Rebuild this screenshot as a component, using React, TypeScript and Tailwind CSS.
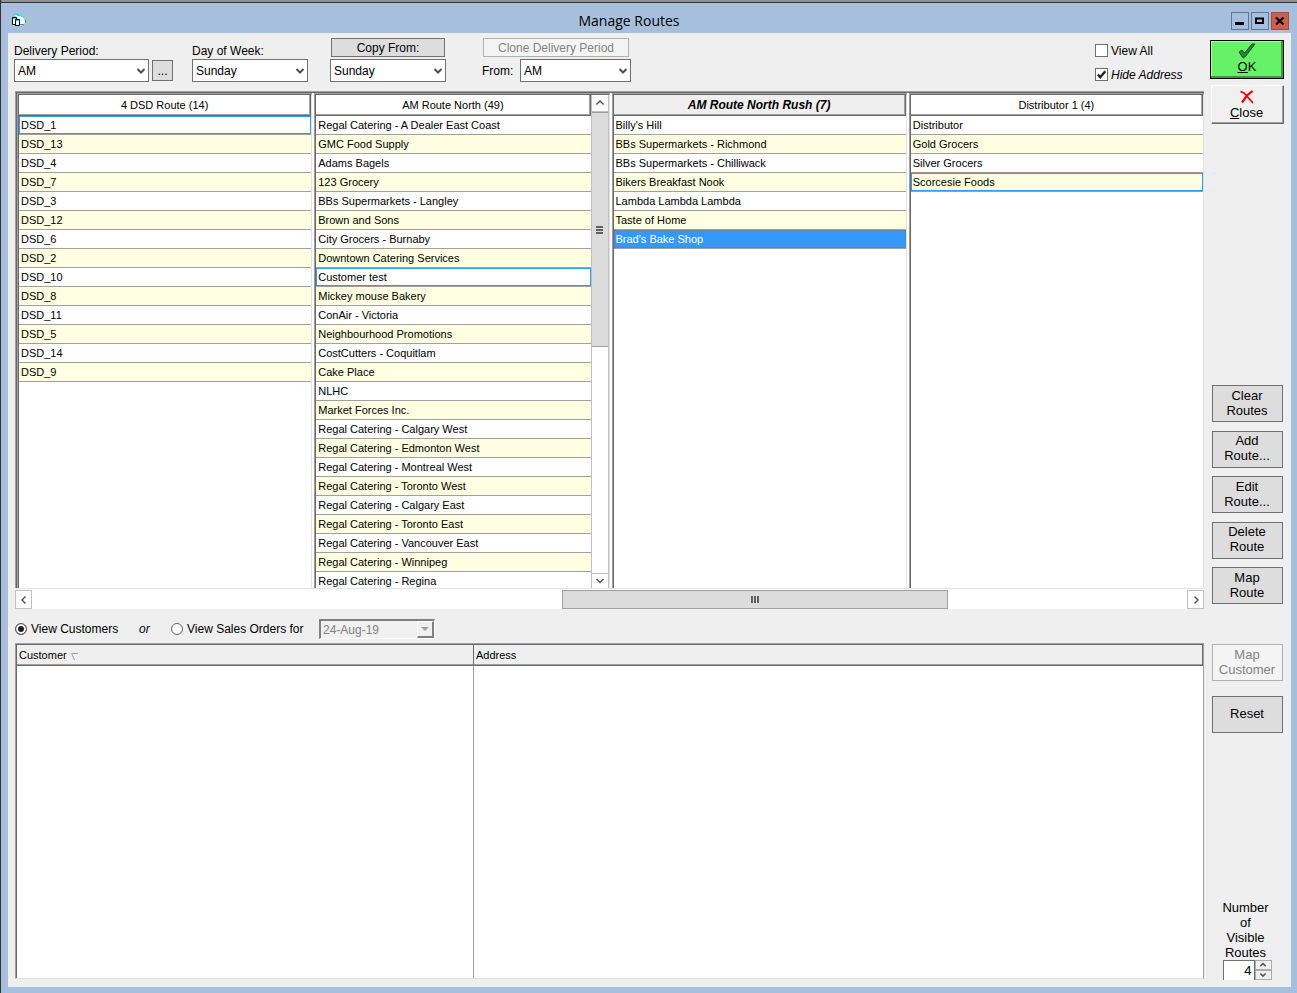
import { useState, type ReactNode } from "react";
import clsx from "clsx";

type Route = {
  title: string;
  stops: string[];
  focused?: number;
  selected?: number;
  active?: boolean;
  scroll?: boolean;
};

const routes: Route[] = [
  {
    title: "4 DSD Route (14)",
    focused: 0,
    stops: ["DSD_1", "DSD_13", "DSD_4", "DSD_7", "DSD_3", "DSD_12", "DSD_6", "DSD_2", "DSD_10", "DSD_8", "DSD_11", "DSD_5", "DSD_14", "DSD_9"],
  },
  {
    title: "AM Route North (49)",
    focused: 8,
    scroll: true,
    stops: [
      "Regal Catering - A Dealer East Coast",
      "GMC Food Supply",
      "Adams Bagels",
      "123 Grocery",
      "BBs Supermarkets - Langley",
      "Brown and Sons",
      "City Grocers - Burnaby",
      "Downtown Catering Services",
      "Customer test",
      "Mickey mouse Bakery",
      "ConAir - Victoria",
      "Neighbourhood Promotions",
      "CostCutters - Coquitlam",
      "Cake Place",
      "NLHC",
      "Market Forces Inc.",
      "Regal Catering - Calgary West",
      "Regal Catering - Edmonton West",
      "Regal Catering - Montreal West",
      "Regal Catering - Toronto West",
      "Regal Catering - Calgary East",
      "Regal Catering - Toronto East",
      "Regal Catering - Vancouver East",
      "Regal Catering - Winnipeg",
      "Regal Catering - Regina",
    ],
  },
  {
    title: "AM Route North Rush (7)",
    active: true,
    selected: 6,
    stops: [
      "Billy's Hill",
      "BBs Supermarkets - Richmond",
      "BBs Supermarkets - Chilliwack",
      "Bikers Breakfast Nook",
      "Lambda Lambda Lambda",
      "Taste of Home",
      "Brad's Bake Shop",
    ],
  },
  {
    title: "Distributor 1 (4)",
    focused: 3,
    stops: ["Distributor", "Gold Grocers", "Silver Grocers", "Scorcesie Foods"],
  },
];

function Chevron({ dir, className }: { dir: "up" | "down" | "left" | "right"; className?: string }) {
  const d = {
    up: "M1.5 6.5 L5 3 L8.5 6.5",
    down: "M1.5 3 L5 6.5 L8.5 3",
    left: "M6.5 1.5 L3 5 L6.5 8.5",
    right: "M3.5 1.5 L7 5 L3.5 8.5",
  }[dir];
  return (
    <svg viewBox="0 0 10 10" className={clsx("h-[10px] w-[10px] shrink-0", className)} fill="none" stroke="#505050" strokeWidth="1.4">
      <path d={d} />
    </svg>
  );
}

function Combo({ id, label, options, className }: { id: string; label?: string; options: string[]; className: string }) {
  return (
    <div className={clsx("relative", className)}>
      <select id={id} aria-label={label} className="block h-[23px] w-full appearance-none border border-[#707070] bg-white pl-[3px] pr-4 text-xs text-black outline-none">
        {options.map((o) => <option key={o}>{o}</option>)}
      </select>
      <Chevron dir="down" className="pointer-events-none absolute right-[3px] top-[7px] stroke-[2]" />
    </div>
  );
}

function Check({ label, italic, defaultChecked }: { label: string; italic?: boolean; defaultChecked?: boolean }) {
  return (
    <label className={clsx("flex h-[15px] items-center gap-[3px]", italic && "italic")}>
      <span className="relative h-[13px] w-[13px]">
        <input type="checkbox" defaultChecked={defaultChecked} className="peer block h-[13px] w-[13px] appearance-none border border-[#707070] bg-white" />
        <svg viewBox="0 0 13 13" className="pointer-events-none absolute inset-0 hidden peer-checked:block" fill="none" stroke="#1f1f1f" strokeWidth="2.2">
          <path d="M2.8 6.5 L5.2 9.3 L10.3 3.2" />
        </svg>
      </span>
      {label}
    </label>
  );
}

function SideButton({ children, disabled }: { children: ReactNode; disabled?: boolean }) {
  return (
    <button
      disabled={disabled}
      className="ml-[2px] mr-px h-[37px] border border-[#707070] bg-[#dddddd] pb-[2px] pr-px text-[13px] leading-[15px] disabled:border-[#adb2b5] disabled:bg-[#f4f4f4] disabled:text-[#838383]"
    >
      {children}
    </button>
  );
}

function VerticalScroll() {
  return (
    <div className="flex w-[18px] shrink-0 flex-col border-x border-[#c0c0c0] bg-white">
      <button aria-label="Scroll up" className="flex h-[17px] shrink-0 items-center justify-center border-b border-[#c0c0c0]">
        <Chevron dir="up" />
      </button>
      <div className="flex h-[235px] shrink-0 flex-col items-center justify-center gap-px border-y border-[#a0a0a0] bg-[#dcdcdc]">
        <i className="h-[2px] w-[7px] bg-[#606060]" />
        <i className="h-[2px] w-[7px] bg-[#606060]" />
        <i className="h-[2px] w-[7px] bg-[#606060]" />
      </div>
      <button aria-label="Scroll down" className="mt-auto flex h-[15px] shrink-0 items-center justify-center border-t border-[#c0c0c0]">
        <Chevron dir="down" />
      </button>
    </div>
  );
}

function HorizontalScroll() {
  return (
    <div className="flex h-[19px] bg-white">
      <button aria-label="Scroll left" className="flex w-[17px] items-center justify-center border border-[#c0c0c0]">
        <Chevron dir="left" />
      </button>
      <div className="grow-[531] basis-0" />
      <div className="flex grow-[385] basis-0 items-center justify-center gap-px border border-[#a0a0a0] bg-[#dcdcdc]">
        <i className="h-[7px] w-[2px] bg-[#606060]" />
        <i className="h-[7px] w-[2px] bg-[#606060]" />
        <i className="h-[7px] w-[2px] bg-[#606060]" />
      </div>
      <div className="grow-[240] basis-0" />
      <button aria-label="Scroll right" className="flex w-[17px] items-center justify-center border border-[#c0c0c0]">
        <Chevron dir="right" />
      </button>
    </div>
  );
}

function RoutePanel({ route }: { route: Route }) {
  return (
    <div className="flex min-w-0 flex-1 basis-0 overflow-hidden border-l border-t border-[#a0a0a0]">
      <div className="flex min-w-0 flex-1 border-l border-r border-t border-l-[#696969] border-r-[#e3e3e3] border-t-[#696969]">
        <div className="min-w-0 flex-1">
          <table className="w-full table-fixed border-separate border-spacing-0 text-[11px]">
            <thead>
              <tr>
                <th
                  className={clsx(
                    "h-[21px] border-b border-r border-[#696969] p-0 leading-[18px] shadow-[inset_-1px_-1px_0_#a0a0a0]",
                    route.active ? "bg-[#efefef] text-xs font-bold italic" : "bg-white font-normal"
                  )}
                >
                  {route.title}
                </th>
              </tr>
            </thead>
            <tbody>
              {route.stops.map((stop, i) => (
                <tr key={stop}>
                  <td className={clsx("h-[19px] border-b border-[#a0a0a0] p-0", i % 2 ? "bg-[#ffffe1]" : "bg-white")}>
                    <div
                      className={clsx(
                        "h-[18px] truncate border pl-px leading-4",
                        route.selected === i && "border-dotted border-[#b06a30] bg-[#3399ff] text-white",
                        route.focused === i && "border-[#3399ff]",
                        route.selected !== i && route.focused !== i && "border-transparent"
                      )}
                    >
                      {stop}
                    </div>
                  </td>
                </tr>
              ))}
            </tbody>
          </table>
        </div>
        {route.scroll && <VerticalScroll />}
      </div>
    </div>
  );
}

function TitleBar() {
  return (
    <header className="flex h-[30px] items-center pl-[10px] pr-[8px]">
      <svg viewBox="0 0 16 14" className="mt-[6px] h-[14px] w-4">
        <path d="M4 1 L11 2 L14 7 L14 9 L9 12 L8 6 Z" fill="#fff" />
        <path d="M3 .5 H8 M6 1.5 H10 M10 2.5 H13" stroke="#19e6f0" />
        <path d="M14.5 6 V9 M9 10.5 H13" stroke="#7a7a7a" />
        <path d="M1.5 3.5 H5.5 V10.5 H1.5 Z" fill="#fff" stroke="#000" />
        <path d="M4.5 5.5 H8.5 V11.5 H4.5 Z" fill="#fff" stroke="#000" />
        <path d="M2 4.5 H5 M5 6.5 H8" stroke="#19e6f0" />
      </svg>
      <h1 className="flex-1 pt-[6px] text-center font-['Open_Sans',sans-serif] text-[14px] leading-5">Manage Routes</h1>
      <div className="flex gap-[2px] pt-[6px]">
        <button aria-label="Minimize" className="h-[18px] w-[18px] border border-[#5f7796]">
          <svg viewBox="0 0 16 16"><path d="M3 9 H12 V12 H3 Z" /></svg>
        </button>
        <button aria-label="Maximize" className="h-[18px] w-[18px] border border-[#5f7796]">
          <svg viewBox="0 0 16 16"><path d="M4 5.5 H11 V10 H4 Z" fill="none" stroke="#000" strokeWidth="2" /></svg>
        </button>
        <button aria-label="Close window" className="h-[18px] w-[18px] border border-[#b0463a] bg-[#cc6050]">
          <svg viewBox="0 0 16 16"><path d="M4 4.5 L11.5 11.5 M11.5 4.5 L4 11.5" fill="none" stroke="#000" strokeWidth="2.2" /></svg>
        </button>
      </div>
    </header>
  );
}

function Toolbar() {
  const days = ["Sunday", "Monday", "Tuesday", "Wednesday", "Thursday", "Friday", "Saturday"];
  return (
    <div className="flex h-[58px] items-end pb-[9px] pl-[6px]">
      <div>
        <label htmlFor="period" className="block h-4 leading-4">Delivery Period:</label>
        <div className="flex items-center gap-[3px]">
          <Combo id="period" options={["AM", "PM"]} className="w-[135px]" />
          <button className="h-[21px] w-[21px] border border-[#707070] bg-[#dddddd]">...</button>
        </div>
      </div>
      <div className="ml-[19px]">
        <label htmlFor="day" className="block h-4 leading-4">Day of Week:</label>
        <Combo id="day" options={days} className="w-[116px]" />
      </div>
      <div className="ml-[22px] flex flex-col gap-[2px]">
        <button className="mx-px h-[19px] border border-[#707070] bg-[#dddddd] leading-4">Copy From:</button>
        <Combo id="copy-day" label="Copy from day" options={days} className="w-[116px]" />
      </div>
      <div className="ml-9 flex flex-col gap-[2px]">
        <button disabled className="ml-px mr-[2px] h-[19px] border border-[#adb2b5] bg-[#f4f4f4] leading-4 text-[#838383]">Clone Delivery Period</button>
        <div className="flex items-center">
          <label htmlFor="from" className="w-[38px]">From:</label>
          <Combo id="from" options={["AM", "PM"]} className="w-[111px]" />
        </div>
      </div>
      <div className="ml-auto flex w-[109px] flex-col gap-[9px]">
        <Check label="View All" />
        <Check label="Hide Address" italic defaultChecked />
      </div>
    </div>
  );
}

function ViewOptions() {
  const [view, setView] = useState("customers");
  const radio = "h-3 w-3 appearance-none rounded-full border border-[#606060] bg-white checked:bg-[#1f1f1f] checked:shadow-[inset_0_0_0_2px_#fff]";
  return (
    <div className="flex h-[34px] items-center pt-[6px]">
      <label className="flex w-[124px] items-center gap-1">
        <input type="radio" name="view" className={radio} checked={view === "customers"} onChange={() => setView("customers")} />
        View Customers
      </label>
      <span className="w-8 italic">or</span>
      <label className="flex w-[148px] items-center gap-1">
        <input type="radio" name="view" className={radio} checked={view === "orders"} onChange={() => setView("orders")} />
        View Sales Orders for
      </label>
      <div className="relative w-[116px]">
        <select disabled aria-label="Order date" className="block h-5 w-full appearance-none border-2 border-b border-r border-[#808080] border-b-white border-r-white bg-[#f0f0f0] pl-[2px] text-xs text-[#808080] opacity-100">
          <option>24-Aug-19</option>
        </select>
        <span className="pointer-events-none absolute bottom-px right-px top-[2px] flex w-[17px] items-center justify-center border-b-2 border-l border-r-2 border-t border-[#808080] border-l-white border-t-white bg-[#f0f0f0]">
          <svg viewBox="0 0 8 4" className="h-1 w-2"><path d="M0 0 H8 L4 4 Z" fill="#a0a0a0" /></svg>
        </span>
      </div>
    </div>
  );
}

function CustomerTable() {
  const th = "h-[21px] border-b border-[#696969] bg-[#efefef] p-0 pl-[2px] text-left font-normal leading-[19px] shadow-[inset_0_-1px_0_#a0a0a0]";
  return (
    <div className="flex flex-1 border border-[#a0a0a0] border-b-[#e3e3e3] bg-white">
      <div className="flex min-h-[320px] flex-1 border-l border-t border-[#696969]">
        <table className="w-full table-fixed border-separate border-spacing-0 text-[11px]">
          <thead>
            <tr>
              <th className={clsx(th, "w-[457px] border-r")}>
                <span className="inline-flex items-center gap-1">
                  Customer
                  <svg viewBox="0 0 8 8" className="mt-[3px] h-2 w-2" fill="none">
                    <path d="M7.5 1 L4 7.5" stroke="#fff" />
                    <path d="M7 .5 H.5 L3.5 7" stroke="#a0a0a0" />
                  </svg>
                </span>
              </th>
              <th className={clsx(th, "border-r")}>Address</th>
            </tr>
          </thead>
          <tbody>
            <tr>
              <td className="border-r border-[#a0a0a0]" />
              <td />
            </tr>
          </tbody>
        </table>
      </div>
    </div>
  );
}

function SideBar() {
  const [visible, setVisible] = useState(4);
  return (
    <aside className="flex w-[74px] shrink-0 flex-col pt-[7px] text-[13px]">
      <button className="flex h-[39px] flex-col items-center border border-black bg-[#66f266] pt-[2px] leading-[15px] shadow-[inset_-2px_-2px_0_#3f9a3f,inset_1px_1px_0_#a8ffa8]">
        <svg viewBox="0 0 18 16" className="h-4 w-[18px]">
          <path d="M1 9 L4 7 L6.5 10 L14 1 L17 1 L7.5 13.5 L5 15 Z" fill="#1f8a2c" stroke="#3a2a4a" strokeWidth=".9" />
        </svg>
        <span><u>O</u>K</span>
      </button>
      <button className="ml-px mt-[6px] flex h-[39px] flex-col items-center border border-white border-b-[#696969] border-r-[#696969] bg-[#f0f0f0] pr-[2px] pt-1 leading-[15px] shadow-[inset_-1px_-1px_0_#a0a0a0]">
        <svg viewBox="0 0 16 14" className="h-[14px] w-4" fill="none" stroke="#f00000">
          <path d="M1.5 1.5 L5 3 L14 13" strokeWidth="1.8" />
          <path d="M13.5 1 L8 5.5 L3 12.5" strokeWidth="2.2" />
        </svg>
        <span className="mt-px"><u>C</u>lose</span>
      </button>
      <div className="mt-[261px] flex h-[219px] flex-col justify-between">
        <SideButton>Clear<br />Routes</SideButton>
        <SideButton>Add<br />Route...</SideButton>
        <SideButton>Edit<br />Route...</SideButton>
        <SideButton>Delete<br />Route</SideButton>
        <SideButton>Map<br />Route</SideButton>
      </div>
      <div className="mt-10 flex flex-col gap-[15px]">
        <SideButton disabled>Map<br />Customer</SideButton>
        <SideButton>Reset</SideButton>
      </div>
      <div className="mt-auto flex flex-col items-center">
        <label htmlFor="visible" className="pr-[3px] text-center leading-[15px]">Number<br />of<br />Visible<br />Routes</label>
        <div className="flex">
          <input
            id="visible"
            value={visible}
            onChange={(e) => setVisible(Number(e.target.value) || 0)}
            className="h-5 w-8 border-l border-r border-t border-[#707070] bg-white pr-[2px] text-right text-[13px] outline-none"
          />
          <div className="flex w-[17px] flex-col">
            <button aria-label="More" onClick={() => setVisible(visible + 1)} className="flex h-[10px] items-center justify-center border border-[#acacac]">
              <Chevron dir="up" className="scale-75 stroke-[2]" />
            </button>
            <button aria-label="Fewer" onClick={() => setVisible(visible - 1)} className="flex h-[10px] items-center justify-center border border-[#acacac]">
              <Chevron dir="down" className="scale-75 stroke-[2]" />
            </button>
          </div>
        </div>
      </div>
    </aside>
  );
}

export default function App() {
  return (
    <div className="flex min-h-screen flex-col border-l border-[#333] bg-[#a6bfdc] font-['Liberation_Sans',Arial,sans-serif] text-xs text-black">
      <div className="h-[3px] border-b border-[#333] bg-[#909090]" />
      <TitleBar />
      <main className="mb-[6px] ml-[7px] mr-[6px] flex flex-1 gap-[6px] bg-[#efefef] pb-[7px] pr-[7px]">
        <div className="flex min-w-0 flex-1 flex-col pb-px">
          <Toolbar />
          <div className="flex flex-1 flex-col pl-[7px]">
            <div className="flex h-[497px] border-l border-t border-[#a0a0a0] bg-white">
              <div className="flex min-w-0 flex-1 gap-[2px] border-l border-t border-[#696969]">
                {routes.map((r) => <RoutePanel key={r.title} route={r} />)}
              </div>
            </div>
            <div className="border-t border-[#e3e3e3] bg-white pt-px">
              <HorizontalScroll />
            </div>
            <ViewOptions />
            <CustomerTable />
          </div>
        </div>
        <SideBar />
      </main>
    </div>
  );
}
